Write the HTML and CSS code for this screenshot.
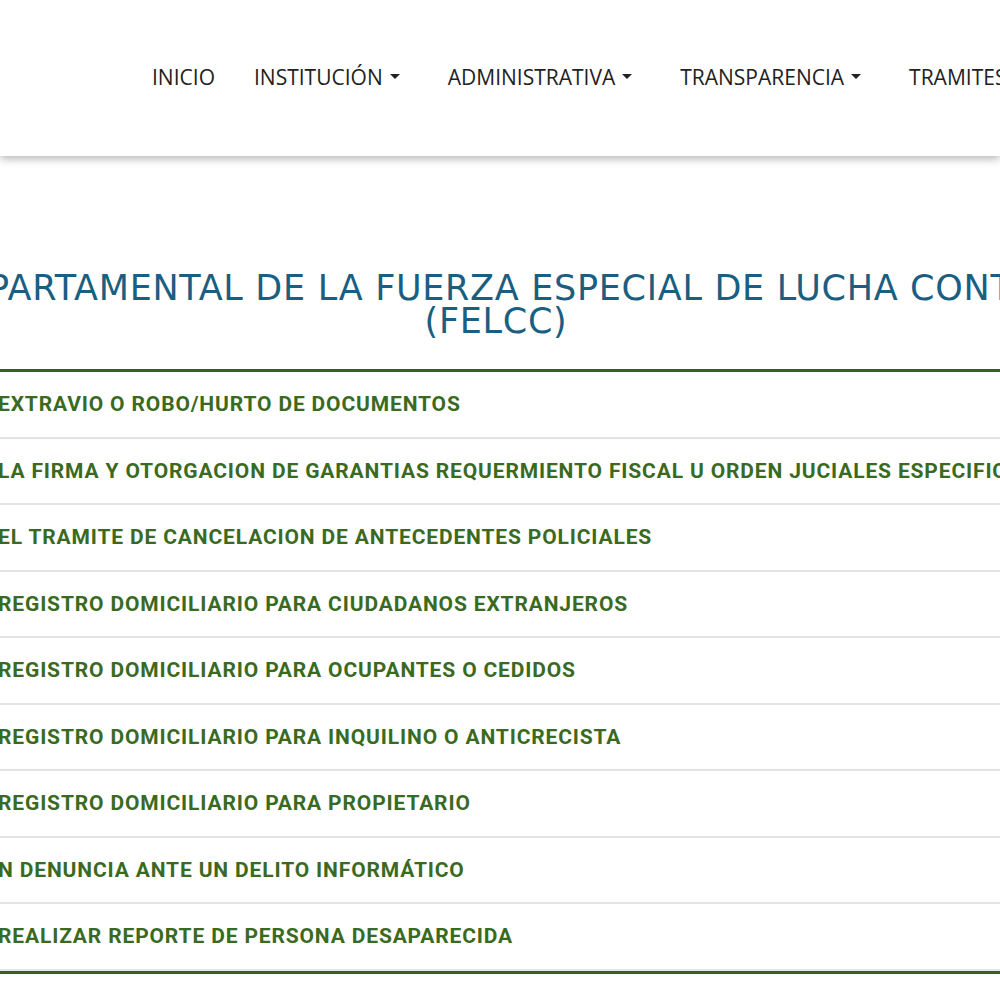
FILE: index.html
```html
<!DOCTYPE html>
<html lang="es">
<head>
<meta charset="utf-8">
<title>Trámites FELCC</title>
<link rel="stylesheet" href="styles.css">
</head>
<body>
<header class="site-header">
  <nav class="main-nav">
    <a class="nav-link nav-first" href="#">INICIO</a>
    <a class="nav-link dropdown" href="#">INSTITUCIÓN<span class="caret"></span></a>
    <a class="nav-link dropdown" href="#">ADMINISTRATIVA<span class="caret"></span></a>
    <a class="nav-link dropdown" href="#">TRANSPARENCIA<span class="caret"></span></a>
    <a class="nav-link" href="#">TRAMITES</a>
  </nav>
</header>
<main class="content">
  <div class="wrapper">
    <h2 class="page-title">DIRECCIÓN DEPARTAMENTAL DE LA FUERZA ESPECIAL DE LUCHA CONTRA EL CRIMEN<br>(FELCC)</h2>
    <ul class="tramites">
      <li class="tramite"><a href="#">EXTRAVIO O ROBO/HURTO DE DOCUMENTOS</a></li>
      <li class="tramite"><a href="#">LA FIRMA Y OTORGACION DE GARANTIAS REQUERMIENTO FISCAL U ORDEN JUCIALES ESPECIFICAS</a></li>
      <li class="tramite"><a href="#">EL TRAMITE DE CANCELACION DE ANTECEDENTES POLICIALES</a></li>
      <li class="tramite"><a href="#">REGISTRO DOMICILIARIO PARA CIUDADANOS EXTRANJEROS</a></li>
      <li class="tramite"><a href="#">REGISTRO DOMICILIARIO PARA OCUPANTES O CEDIDOS</a></li>
      <li class="tramite"><a href="#">REGISTRO DOMICILIARIO PARA INQUILINO O ANTICRECISTA</a></li>
      <li class="tramite"><a href="#">REGISTRO DOMICILIARIO PARA PROPIETARIO</a></li>
      <li class="tramite"><a href="#">N DENUNCIA ANTE UN DELITO INFORMÁTICO</a></li>
      <li class="tramite"><a href="#">REALIZAR REPORTE DE PERSONA DESAPARECIDA</a></li>
    </ul>
  </div>
</main>
</body>
</html>
```

FILE: styles.css
```css
html, body {
  margin: 0;
  padding: 0;
  overflow-x: hidden;
  background: #ffffff;
}

.site-header {
  height: 156px;
  background: #ffffff;
  box-shadow: 0 3px 8px rgba(0, 0, 0, 0.28);
  display: flex;
  align-items: center;
  position: relative;
  z-index: 2;
}

.main-nav {
  display: flex;
  align-items: center;
  padding-left: 152px;
  padding-bottom: 2px;
  white-space: nowrap;
}

.nav-link {
  font-family: "Open Sans", "Liberation Sans", sans-serif;
  font-size: 21px;
  color: #222222;
  text-decoration: none;
  display: flex;
  align-items: center;
  margin-right: 48px;
}

.nav-first {
  margin-right: 39px;
}

.caret {
  display: inline-block;
  width: 0;
  height: 0;
  margin-left: 7px;
  margin-top: -2px;
  border-top: 5px solid #222222;
  border-left: 5px solid transparent;
  border-right: 5px solid transparent;
}

.content {
  padding-top: 116px;
}

.wrapper {
  width: 1600px;
  margin-left: -304px;
}

.page-title {
  margin: 0 0 31px 0;
  text-align: center;
  font-family: "DejaVu Sans", "Liberation Sans", sans-serif;
  font-weight: normal;
  font-size: 35px;
  line-height: 33px;
  letter-spacing: 0.7px;
  color: #1a5e80;
  white-space: nowrap;
}

.tramites {
  list-style: none;
  margin: 0;
  padding: 0;
  border-top: 3px solid #3a5e1b;
  border-bottom: 3px solid #3a5e1b;
}

.tramite {
  padding: 20.25px 0 20.25px 302px;
  border-bottom: 2px solid #e4e4e4;
  font-family: Roboto, "Liberation Sans", sans-serif;
  font-weight: bold;
  font-size: 21px;
  line-height: 24px;
  letter-spacing: 0.85px;
  white-space: nowrap;
}

.tramite a {
  color: #3a6a1f;
  text-decoration: none;
}
```
